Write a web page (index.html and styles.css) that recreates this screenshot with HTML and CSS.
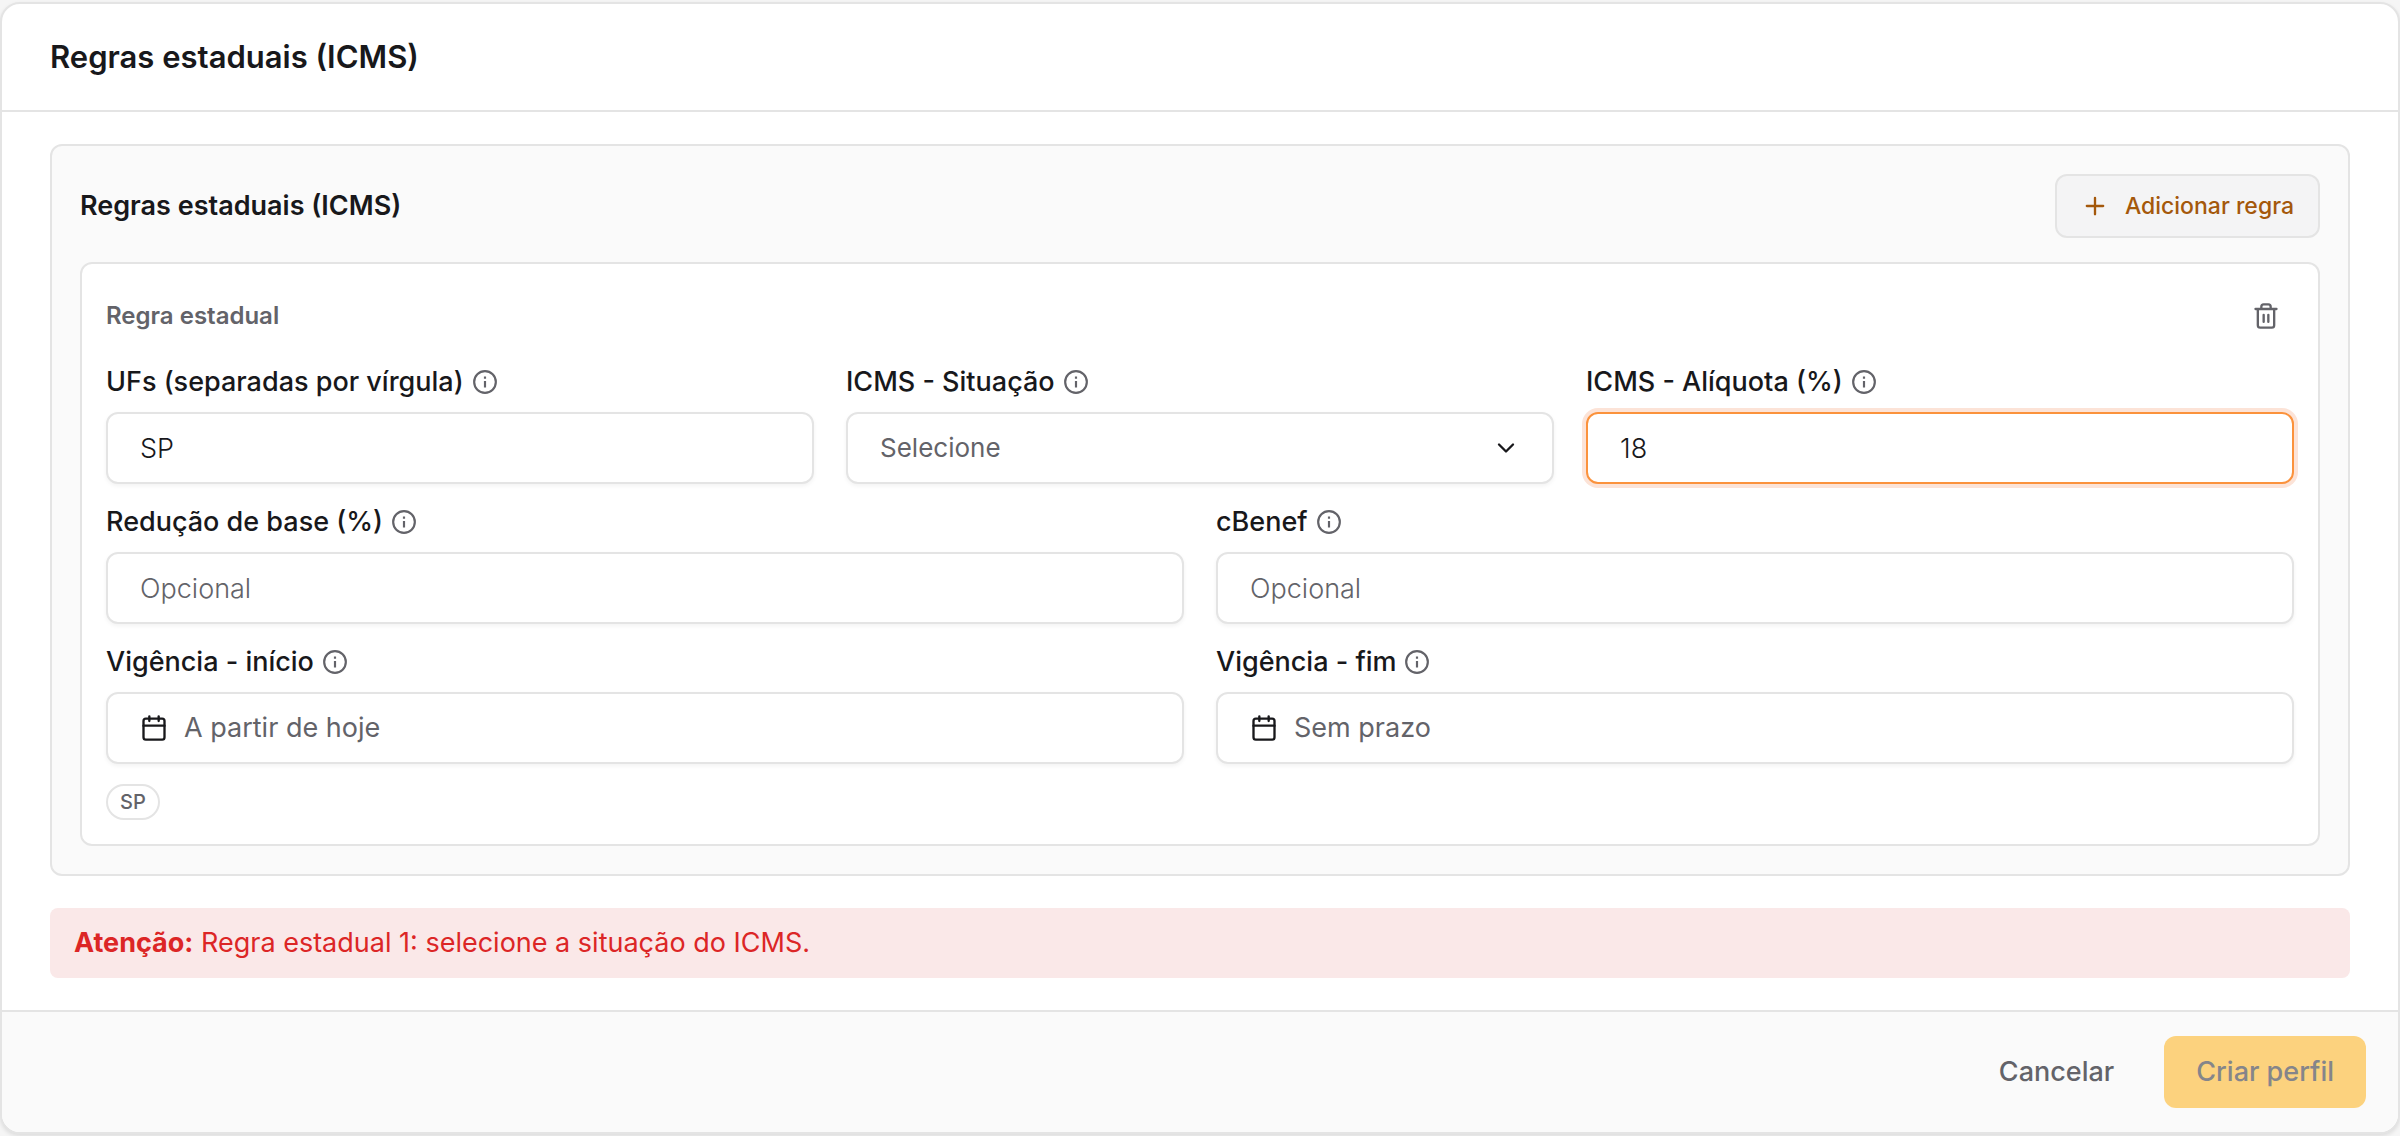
FILE: index.html
```html
<!DOCTYPE html>
<html lang="pt-BR">
<head>
<meta charset="utf-8">
<meta name="viewport" content="width=device-width, initial-scale=1">
<title>Regras estaduais (ICMS)</title>
<link rel="stylesheet" href="styles.css">
</head>
<body>
<svg class="sprite" aria-hidden="true">
  <symbol id="info" viewBox="0 0 24 24"><circle cx="12" cy="12" r="10"/><path stroke-linecap="butt" d="M12 17v-6M12 9V7"/></symbol>
  <symbol id="calendar" viewBox="0 0 24 24"><path d="M8 2v4M16 2v4M3 10h18"/><rect x="3" y="4" width="18" height="18" rx="2"/></symbol>
</svg>
<form class="dialog">
  <header class="dialog-header"><h1 class="title">Regras estaduais (ICMS)</h1></header>
  <main class="dialog-body">
    <section class="panel">
      <div class="panel-head">
        <h2 class="subtitle">Regras estaduais (ICMS)</h2>
        <button type="button" class="btn btn-add">
          <svg class="icon icon-add" viewBox="0 0 24 24"><path d="M12 5v14M5 12h14"/></svg>
          Adicionar regra
        </button>
      </div>
      <div class="rule">
        <div class="rule-head">
          <h3 class="rule-title">Regra estadual</h3>
          <button type="button" class="btn-trash" aria-label="Remover regra">
            <svg class="icon icon-trash" viewBox="0 0 24 24"><path d="M3 6h18M19 6v14a2 2 0 0 1-2 2H7a2 2 0 0 1-2-2V6M8 6V4a2 2 0 0 1 2-2h4a2 2 0 0 1 2 2v2M10 11v6M14 11v6"/></svg>
          </button>
        </div>
        <div class="row row-3">
          <div class="field">
            <div class="label"><label for="ufs">UFs (separadas por vírgula)</label><svg class="icon icon-info"><use href="#info"/></svg></div>
            <input class="control" id="ufs" type="text" value="SP">
          </div>
          <div class="field">
            <div class="label"><label for="situacao">ICMS - Situação</label><svg class="icon icon-info"><use href="#info"/></svg></div>
            <div class="select-wrap">
              <select class="control select" id="situacao"><option>Selecione</option></select>
              <svg class="icon icon-chevron" viewBox="0 0 24 24"><path d="m6 9 6 6 6-6"/></svg>
            </div>
          </div>
          <div class="field">
            <div class="label"><label for="aliquota">ICMS - Alíquota (%)</label><svg class="icon icon-info"><use href="#info"/></svg></div>
            <input class="control is-active" id="aliquota" type="text" value="18">
          </div>
        </div>
        <div class="row row-2">
          <div class="field">
            <div class="label"><label for="reducao">Redução de base (%)</label><svg class="icon icon-info"><use href="#info"/></svg></div>
            <input class="control" id="reducao" type="text" placeholder="Opcional">
          </div>
          <div class="field">
            <div class="label"><label for="cbenef">cBenef</label><svg class="icon icon-info"><use href="#info"/></svg></div>
            <input class="control" id="cbenef" type="text" placeholder="Opcional">
          </div>
        </div>
        <div class="row row-2">
          <div class="field">
            <div class="label"><label for="inicio">Vigência - início</label><svg class="icon icon-info"><use href="#info"/></svg></div>
            <button class="control date" id="inicio" type="button"><svg class="icon icon-date"><use href="#calendar"/></svg>A partir de hoje</button>
          </div>
          <div class="field">
            <div class="label"><label for="fim">Vigência - fim</label><svg class="icon icon-info"><use href="#info"/></svg></div>
            <button class="control date" id="fim" type="button"><svg class="icon icon-date"><use href="#calendar"/></svg>Sem prazo</button>
          </div>
        </div>
        <div class="chips"><span class="chip">SP</span></div>
      </div>
    </section>
    <p class="alert" role="alert"><strong>Atenção:</strong> Regra estadual 1: selecione a situação do ICMS.</p>
  </main>
  <footer class="dialog-footer">
    <button type="button" class="btn btn-ghost">Cancelar</button>
    <button type="submit" class="btn btn-primary" disabled>Criar perfil</button>
  </footer>
</form>
</body>
</html>
```
FILE: styles.css
```css
:root {
  --border: #e4e4e4;
  --text: #18181b;
  --muted: #636369;
  --soft: #fafafa;
}
* { box-sizing: border-box; }
body {
  margin: 0;
  padding: 2px 0;
  background: #f5f5f5;
  color: var(--text);
  font: 400 27px/36px Inter, "Liberation Sans", sans-serif;
}
h1, h2, h3, p { margin: 0; }
button, input, select { font: inherit; color: inherit; }
.sprite { display: none; }
.icon {
  flex: none;
  fill: none;
  stroke: currentColor;
  stroke-width: 2;
  stroke-linecap: round;
  stroke-linejoin: round;
}
.dialog {
  overflow: hidden;
  background: #fff;
  border: 2px solid var(--border);
  border-radius: 20px;
  box-shadow: 0 2px 4px rgb(0 0 0 / 10%);
}
.dialog-header {
  padding: 33px 48px;
  border-bottom: 2px solid var(--border);
}
.title { font-size: 31px; line-height: 40px; font-weight: 600; }
.dialog-body {
  display: flex;
  flex-direction: column;
  gap: 32px;
  padding: 32px 48px;
}
.panel {
  display: flex;
  flex-direction: column;
  gap: 24px;
  padding: 28px;
  background: var(--soft);
  border: 2px solid var(--border);
  border-radius: 12px;
}
.panel-head, .rule-head {
  display: flex;
  align-items: center;
  justify-content: space-between;
}
.subtitle { font-size: 27px; font-weight: 600; line-height: 36px; }
.btn {
  display: flex;
  align-items: center;
  border: 0;
  border-radius: 12px;
  background: none;
  font-weight: 500;
}
.btn-add {
  gap: 16px;
  height: 64px;
  padding: 0 24px;
  border: 2px solid var(--border);
  background: #f4f4f5;
  color: #a4580b;
  font-size: 23px;
}
.icon-add { width: 28px; height: 28px; }
.rule {
  display: flex;
  flex-direction: column;
  gap: 20px;
  padding: 24px;
  background: #fff;
  border: 2px solid var(--border);
  border-radius: 12px;
}
.rule-title { font-size: 24px; font-weight: 600; color: var(--muted); }
.btn-trash {
  display: grid;
  place-items: center;
  width: 56px;
  height: 56px;
  padding: 0;
  border: 0;
  background: none;
  color: var(--muted);
}
.icon-trash { width: 28px; height: 28px; }
.row { display: grid; gap: 32px; }
.row-3 { grid-template-columns: repeat(3, minmax(0, 1fr)); }
.row-2 { grid-template-columns: repeat(2, minmax(0, 1fr)); }
.field { display: flex; flex-direction: column; gap: 12px; }
.label {
  display: flex;
  align-items: center;
  gap: 8px;
  font-weight: 500;
}
.icon-info { width: 26px; height: 26px; color: var(--muted); }
.control {
  width: 100%;
  height: 72px;
  padding: 0 32px;
  border: 2px solid var(--border);
  border-radius: 12px;
  outline: 0;
  background: #fff;
  box-shadow: 0 2px 4px rgb(0 0 0 / 5%);
  font-weight: 300;
}
.control::placeholder { color: var(--muted); opacity: 1; }
.control.is-active {
  border-color: #fb923c;
  box-shadow: 0 0 0 4px #fce3d7;
}
.select-wrap { display: grid; align-items: center; }
.select-wrap > * { grid-area: 1 / 1; }
.select {
  appearance: none;
  color: var(--muted);
  font-size: 26px;
  font-weight: 400;
}
.icon-chevron {
  justify-self: end;
  width: 28px;
  height: 28px;
  margin-right: 34px;
  pointer-events: none;
}
.date {
  display: flex;
  align-items: center;
  gap: 16px;
  color: var(--muted);
  font-weight: 400;
}
.icon-date { width: 28px; height: 28px; color: var(--text); }
.chips { display: flex; gap: 8px; }
.chip {
  padding: 0 12px;
  border: 2px solid var(--border);
  border-radius: 18px;
  color: var(--muted);
  font-size: 20px;
  line-height: 32px;
  font-weight: 500;
}
.alert {
  padding: 17px 24px;
  border-radius: 8px;
  background: #fae8e8;
  color: #dc2626;
}
.alert strong { font-weight: 700; }
.dialog-footer {
  display: flex;
  justify-content: flex-end;
  gap: 18px;
  padding: 24px 32px;
  border-top: 2px solid var(--border);
  background: var(--soft);
}
.btn-ghost, .btn-primary { height: 72px; padding: 0 32px; }
.btn-ghost { color: var(--muted); }
.btn-primary { background: #fcd27e; color: #85858a; }
```
